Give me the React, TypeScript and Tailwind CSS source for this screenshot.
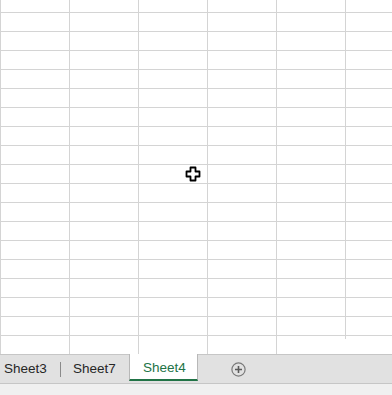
import React from "react";

const COLS = [69, 69, 69, 69, 69, 46];
const ROWS = 17;

const Cell = ({ w, h, last }: { w: number; h: number; last?: boolean }) => (
  <div
    className={last ? "shrink-0 border-b border-[#d4d4d4]" : "shrink-0 border-r border-b border-[#d4d4d4]"}
    style={{ width: w, height: h }}
  />
);

const GridRow = ({ h }: { h: number }) => (
  <div className="flex">
    {COLS.map((w, i) => (
      <Cell key={i} w={w} h={h} last={i === COLS.length - 1} />
    ))}
  </div>
);

const CellCursor = () => (
  <svg
    className="absolute left-[185px] top-[166px]"
    width="16"
    height="16"
    viewBox="0 0 16 16"
  >
    <path
      d="M5.5 1.5h5v4h4v5h-4v4h-5v-4h-4v-5h4z"
      fill="#fff"
      stroke="#000"
      strokeWidth="1.8"
      strokeLinejoin="round"
    />
  </svg>
);

export default function App() {
  return (
    <div
      className="relative w-[392px] h-[395px] overflow-hidden bg-white"
      style={{ fontFamily: '"Liberation Sans", Arial, sans-serif' }}
    >
      {/* シート領域 */}
      <div className="h-[354px] overflow-hidden border-l border-[#d4d4d4]">
        <GridRow h={13} />
        {Array.from({ length: ROWS }).map((_, i) => (
          <GridRow key={i} h={19} />
        ))}
        {/* 最終行: 右の2列は罫線が途中で切れる */}
        <div className="flex">
          {COLS.map((w, i) =>
            i < 4 ? (
              <div key={i} className="shrink-0 h-[18px] border-r border-[#d4d4d4]" style={{ width: w }} />
            ) : (
              <div key={i} className="shrink-0 h-[18px]" style={{ width: w }}>
                {i < COLS.length - 1 && <div className="h-[3px] border-r border-[#d4d4d4]" />}
              </div>
            )
          )}
        </div>
      </div>

      <CellCursor />

      {/* シートタブ */}
      <div className="flex items-stretch h-[30px] bg-[#e1e1e1] border-t border-b border-[#c6c6c6] text-[13.5px] text-[#262626]">
        <div className="w-[60px] flex items-center pl-[4px]">Sheet3</div>
        <div className="self-center w-px h-[15px] bg-[#8a8a8a]" />
        <div className="w-[68px] flex items-center pl-[12px]">Sheet7</div>
        <div className="-mt-px w-[69px] h-[27px] flex items-center pl-[13px] bg-white border-l border-r border-[#b8b8b8] border-b-2 border-b-[#217346] text-[#217346]">
          <span className="pt-[3px]">Sheet4</span>
        </div>
        <div className="w-[33px]" />
        <div className="self-center w-[15px] h-[15px]">
          <svg width="15" height="15" viewBox="0 0 15 15">
            <circle cx="7.5" cy="7.5" r="6.6" fill="none" stroke="#7a7a7a" strokeWidth="1.2" />
            <path d="M7.5 4v7M4 7.5h7" stroke="#5a5a5a" strokeWidth="1.6" />
          </svg>
        </div>
      </div>
      <div className="h-[11px] bg-[#f0f0f0]" />
    </div>
  );
}
